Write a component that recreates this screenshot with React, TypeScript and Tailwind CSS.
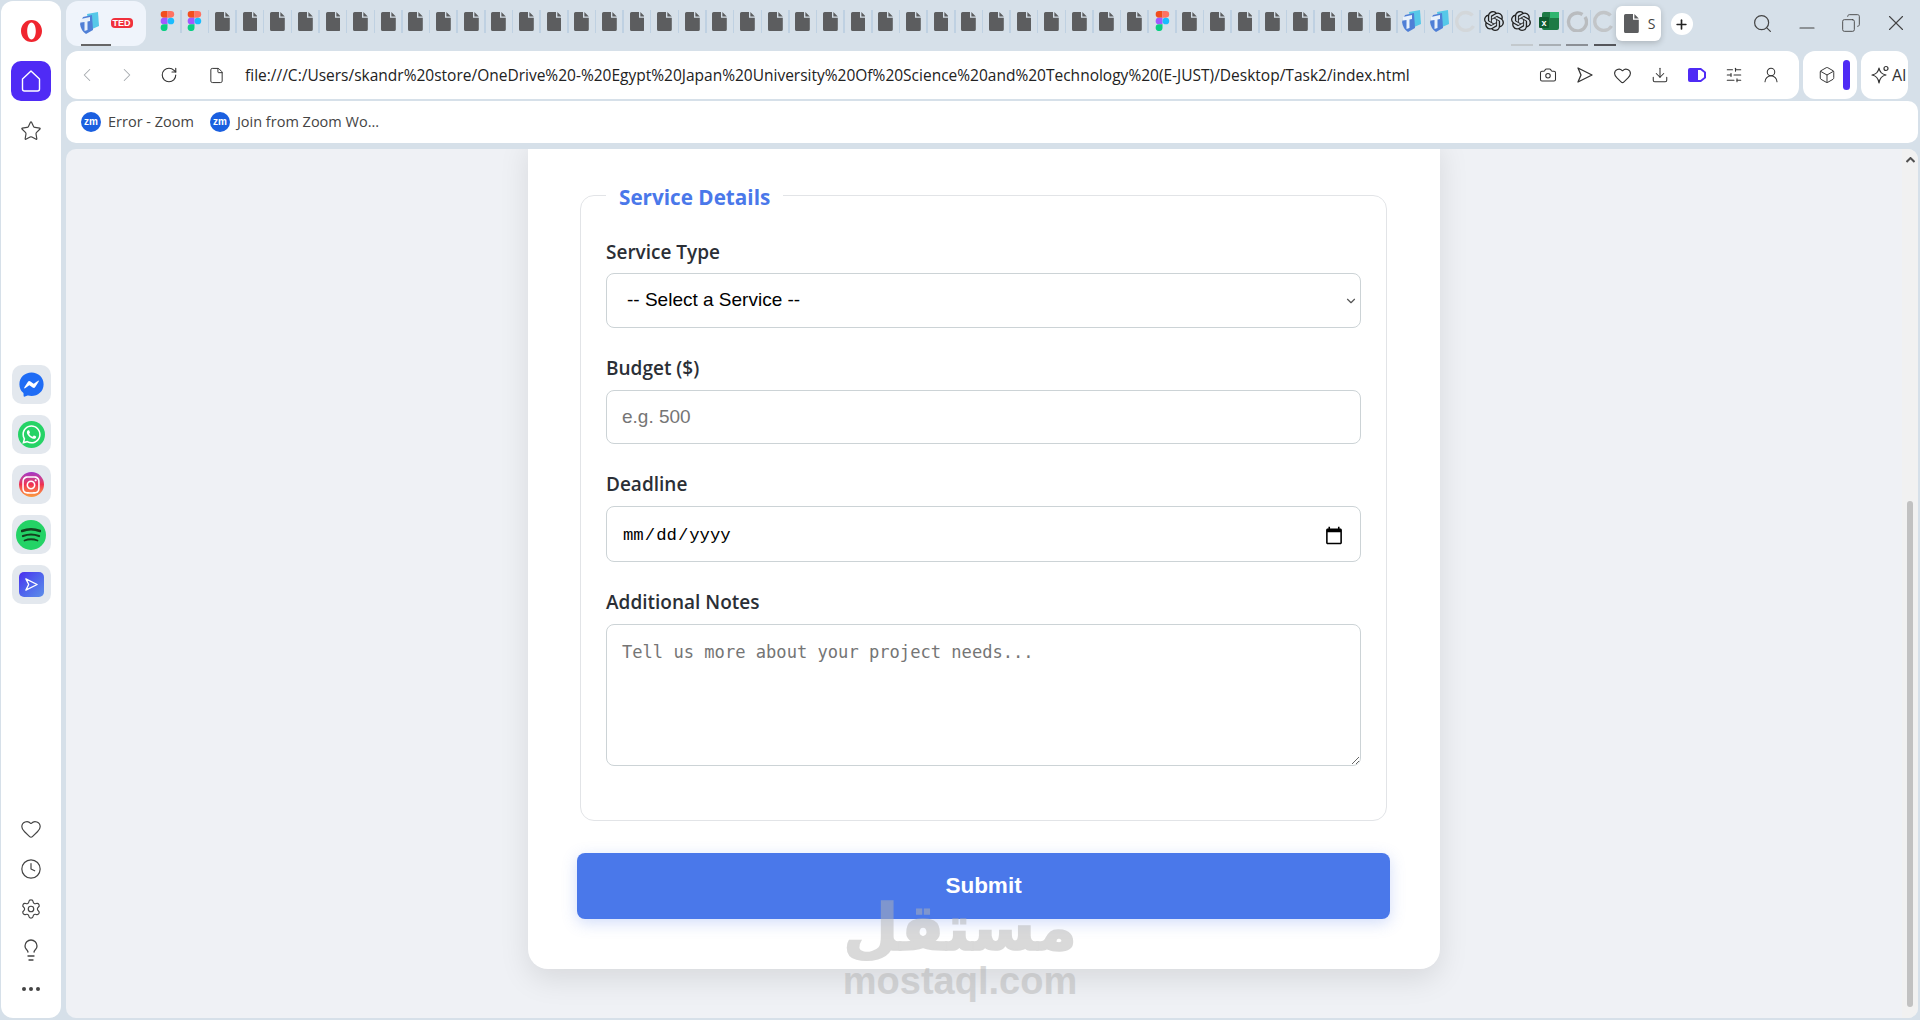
import React from "react";
import {
  ChevronLeft, ChevronRight, ChevronDown, RotateCw, File, Camera, Heart, Download, SlidersHorizontal,
  UserRound, Box, Search, Minus, Copy, X, Star, Clock, Settings, Lightbulb, Plus,
} from "lucide-react";
import { FaFacebookMessenger, FaWhatsapp, FaInstagram } from "react-icons/fa";
import { SiOpenai } from "react-icons/si";

function Doc({ size = 19 }: { size?: number }) {
  return (
    <svg width={size * 0.78} height={size} viewBox="0 0 14 18">
      <path d="M1.5 0H8.5V5.5H14V16.5A1.5 1.5 0 0 1 12.5 18H1.5A1.5 1.5 0 0 1 0 16.5V1.5A1.5 1.5 0 0 1 1.5 0ZM9.8 0L14 4.2H9.8Z" fill="#5c5d5f" />
    </svg>
  );
}

function Figma() {
  return (
    <svg width="15" height="20" viewBox="0 0 15 22">
      <path d="M0 3.6A3.6 3.6 0 0 1 3.6 0H7.5V7.3H3.6A3.6 3.6 0 0 1 0 3.6Z" fill="#f24e1e" />
      <path d="M7.5 0H11.2A3.65 3.65 0 0 1 11.2 7.3H7.5Z" fill="#ff7262" />
      <path d="M0 11A3.6 3.6 0 0 1 3.6 7.3H7.5V14.7H3.6A3.6 3.6 0 0 1 0 11Z" fill="#a259ff" />
      <circle cx="11.2" cy="11" r="3.7" fill="#1abcfe" />
      <path d="M0 18.3A3.6 3.6 0 0 1 3.6 14.7H7.5V18.3A3.7 3.7 0 0 1 0 18.3Z" fill="#0acf83" />
    </svg>
  );
}

function Teams() {
  return (
    <svg width="22" height="24" viewBox="0 0 22 24">
      <path d="M9 3 L20 1 L21 15 L12 19Z" fill="#56c8e8" />
      <path d="M5 6 L14 4 L15 19 L8 23 Q3 20 2 13Z" fill="#4f7fd6" />
      <path d="M3 8 L12 6 L12 10 L9.5 10.5 L9.5 19 L6.5 20 L6.5 11 L3 11.5Z" fill="#e8f1fb" />
    </svg>
  );
}

function Spinner({ tone = "#c9cdd0", d = "M17.5 5.5A9 9 0 1 0 18.5 16" }: { tone?: string; d?: string }) {
  return (
    <svg width="22" height="22" viewBox="0 0 22 22" fill="none">
      <path d={d} stroke={tone} strokeWidth="3.4" />
    </svg>
  );
}

function Excel() {
  return (
    <svg width="20" height="20" viewBox="0 0 20 20">
      <rect x="3" y="1" width="17" height="18" rx="2" fill="#1d7a45" />
      <rect x="11" y="1" width="9" height="6" fill="#2fb56f" />
      <rect x="0" y="6" width="10" height="11" rx="1" fill="#0f5c30" />
      <text x="5" y="15" textAnchor="middle" fontSize="9" fontWeight="700" fill="#fff" fontFamily="Liberation Sans, sans-serif">x</text>
    </svg>
  );
}

type T = { k: string; line?: string };
const tabs: T[] = [];
tabs.push({ k: "figma" }, { k: "figma" });
for (let i = 0; i < 34; i++) tabs.push({ k: "doc" });
tabs.push({ k: "figma" });
for (let i = 0; i < 8; i++) tabs.push({ k: "doc" });
tabs.push({ k: "teams" }, { k: "teams" }, { k: "spin" }, { k: "gpt" }, { k: "gpt", line: "bg-[#c3c9cd]" }, { k: "excel", line: "bg-[#a9afb4]" }, { k: "spin2", line: "bg-[#8b8f95]" }, { k: "spin3", line: "bg-[#55565b]" });

function TabIcon({ k }: { k: string }) {
  if (k === "figma") return <Figma />;
  if (k === "doc") return <Doc />;
  if (k === "teams") return <Teams />;
  if (k === "gpt") return <SiOpenai className="text-[20px] text-[#222]" />;
  if (k === "excel") return <Excel />;
  if (k === "spin") return <Spinner tone="#d3d7da" />;
  if (k === "spin2") return <Spinner tone="#b9bcbf" d="M16.5 4.5A9 9 0 1 0 19 7" />;
  return <Spinner tone="#c2c5c8" />;
}

function TabItem({ t, last }: { t: T; last: boolean }) {
  return (
    <div className="flex h-[46px] w-[27.65px] shrink-0 flex-col items-center">
      <div className="flex h-[44px] w-full items-center justify-center">
        <div className="flex w-[26px] justify-center pb-[2px]">
          <TabIcon k={t.k} />
        </div>
        <div className={last ? "h-[23px] w-[1.5px] shrink-0 mb-[2px]" : "h-[23px] w-[1.5px] shrink-0 bg-[#bfd1e2] mb-[2px]"} />
      </div>
      <div className={`h-[2px] w-[22px] ${t.line ?? ""}`} />
    </div>
  );
}

function SideApp({ children }: { children: React.ReactNode }) {
  return <div className="grid h-[39px] w-[39px] place-items-center rounded-[10px] bg-[#e3e8ee]">{children}</div>;
}

function ZoomDot() {
  return (
    <span className="flex h-[20px] w-[20px] items-center justify-center rounded-full bg-[#1a5fe0] text-[10px] font-bold leading-none text-white" style={{ fontFamily: "'Liberation Sans', sans-serif" }}>
      zm
    </span>
  );
}

const labelCls = "block text-[19px] font-semibold leading-[26px] text-[#2b2f36] [font-family:'Open_Sans',sans-serif]";
const fieldCls = "block w-full rounded-[8px] border-[1.5px] border-[#ccd3d6] bg-white outline-none";

export default function App() {
  return (
    <div className="flex h-[1020px] w-[1920px] overflow-hidden bg-[#d6e0e9] [font-family:'Open_Sans',sans-serif]">
      {/* Sidebar */}
      <aside className="ml-[1px] mt-[1px] mb-[2px] flex w-[60px] shrink-0 flex-col items-center rounded-[12px] bg-white">
        <svg className="mt-[19px]" width="21" height="22" viewBox="0 0 21 22" fill="none">
          <path fillRule="evenodd" clipRule="evenodd" d="M10.5 0C16.3 0 21 4.9 21 11S16.3 22 10.5 22 0 17.1 0 11 4.7 0 10.5 0ZM10.5 2.5C8 2.5 6.2 6.3 6.2 11S8 19.5 10.5 19.5 14.8 15.7 14.8 11 13 2.5 10.5 2.5Z" fill="#f0252f" />
        </svg>
        <div className="mt-[19px] flex h-[40px] w-[40px] items-center justify-center rounded-[10px] bg-[#4f2bf5]">
          <svg width="22" height="24" viewBox="0 0 22 24" fill="none" stroke="#fff" strokeWidth="1.4" strokeLinejoin="round">
            <path d="M11 2 L19.5 10 V20 A2 2 0 0 1 17.5 22 H4.5 A2 2 0 0 1 2.5 20 V10 Z" />
          </svg>
        </div>
        <Star className="mt-[19px]" size={22} strokeWidth={1.3} color="#444" />
        <div className="mt-[223px] flex flex-col gap-[11px]">
          <SideApp>
            <span className="col-start-1 row-start-1 h-[14px] w-[14px] rounded-full bg-white" />
            <FaFacebookMessenger className="col-start-1 row-start-1 text-[25px] text-[#1f6cf5]" />
          </SideApp>
          <SideApp>
            <span className="col-start-1 row-start-1 h-[27px] w-[27px] rounded-full bg-[#25d366]" />
            <FaWhatsapp className="col-start-1 row-start-1 text-[21px] text-white" />
          </SideApp>
          <SideApp>
            <span className="flex h-[25px] w-[25px] items-center justify-center rounded-full bg-gradient-to-b from-[#a332c8] via-[#f0304f] to-[#fa9a3c]">
              <FaInstagram className="text-[20px] text-white" />
            </span>
          </SideApp>
          <SideApp>
            <span className="flex h-[30px] w-[30px] items-center justify-center rounded-full bg-[#24d366]">
              <svg width="20" height="16" viewBox="0 0 20 16" fill="none" stroke="#14401f" strokeLinecap="round">
                <path d="M1 4 Q10 0.5 19 4" strokeWidth="2.6" />
                <path d="M2 9 Q10 6 18 9" strokeWidth="2.2" />
                <path d="M3.5 13.5 Q10 11 16.5 13.5" strokeWidth="1.8" />
              </svg>
            </span>
          </SideApp>
          <SideApp>
            <span className="flex h-[25px] w-[25px] items-center justify-center rounded-[5px] bg-gradient-to-br from-[#4a25ef] to-[#5d8ee8]">
              <svg width="15" height="15" viewBox="0 0 16 16" fill="none" stroke="#fff" strokeWidth="1.4" strokeLinejoin="round">
                <path d="M2 2 L14 8 L2 14 L5 8 Z" />
              </svg>
            </span>
          </SideApp>
        </div>
        <div className="mt-auto mb-[26px] flex flex-col items-center gap-[18px]">
          <Heart size={22} strokeWidth={1.3} color="#444" />
          <Clock size={22} strokeWidth={1.3} color="#444" />
          <Settings size={22} strokeWidth={1.3} color="#444" />
          <Lightbulb size={24} strokeWidth={1.3} color="#444" />
          <div className="mt-[6px] flex h-[6px] items-center gap-[3px]">
            <span className="h-[4px] w-[4px] rounded-full bg-[#444]" />
            <span className="h-[4px] w-[4px] rounded-full bg-[#444]" />
            <span className="h-[4px] w-[4px] rounded-full bg-[#444]" />
          </div>
        </div>
      </aside>

      {/* Main column */}
      <div className="flex min-w-0 flex-1 flex-col pl-[5px] pr-[2px]">
        {/* Tab strip */}
        <div className="flex h-[51px] shrink-0 items-start">
          <div className="mt-[1px] flex h-[45px] w-[80px] shrink-0 flex-col items-center rounded-[12px] bg-[#eff4fb]">
            <div className="flex h-[43px] w-full items-center justify-center gap-[11px] pr-[2px]">
              <Teams />
              <span className="rounded-[4px] bg-[#f0303c] px-[2px] text-[9px] font-black leading-[10px] text-white" style={{ fontFamily: "'Liberation Sans', sans-serif" }}>TED</span>
            </div>
            <div className="mr-[20px] h-[2px] w-[30px] bg-[#666]" />
          </div>
          <div className="ml-[8px] flex shrink-0">
            {tabs.map((t, i) => <TabItem key={i} t={t} last={i === tabs.length - 1} />)}
          </div>
          <div className="-ml-[3px] mt-[6px] flex h-[35px] w-[45px] shrink-0 items-center gap-[9px] overflow-hidden rounded-[6px] bg-white pl-[8px] shadow-[0_2px_6px_rgba(0,0,0,0.2)]">
            <Doc />
            <span className="text-[14px] text-[#444]">S</span>
          </div>
          <div className="ml-[10px] mt-[13px] flex h-[22px] w-[22px] shrink-0 items-center justify-center rounded-full bg-white">
            <Plus size={15} strokeWidth={2.6} color="#222" />
          </div>
          <div className="ml-auto flex h-[46px] items-center pr-[9px]">
            <Search size={21} strokeWidth={1.4} color="#444" />
            <Minus className="ml-[22px] mt-[10px]" size={24} strokeWidth={1.1} color="#444" />
            <Copy className="ml-[22px] scale-x-[-1]" size={20} strokeWidth={1.1} color="#444" />
            <X className="ml-[22px]" size={26} strokeWidth={1} color="#444" />
          </div>
        </div>

        {/* Address row */}
        <div className="flex h-[48px] shrink-0 gap-[4px] pr-[10px]">
          <div className="flex min-w-0 flex-1 items-center rounded-[12px] bg-white pl-[10px]">
            <ChevronLeft size={22} strokeWidth={1.1} color="#a4a9ad" />
            <ChevronRight className="ml-[18px]" size={22} strokeWidth={1.1} color="#a4a9ad" />
            <RotateCw className="ml-[22px]" size={18} strokeWidth={1.5} color="#333" />
            <File className="ml-[30px]" size={17} strokeWidth={1.4} color="#333" />
            <span className="ml-[20px] whitespace-nowrap text-[15.5px] leading-[20px] text-[#222]">
              file:///C:/Users/skandr%20store/OneDrive%20-%20Egypt%20Japan%20University%20Of%20Science%20and%20Technology%20(E-JUST)/Desktop/Task2/index.html
            </span>
            <div className="ml-auto flex items-center gap-[19px] pr-[19px]">
              <Camera size={18} strokeWidth={1.4} color="#333" />
              <svg width="18" height="18" viewBox="0 0 18 18" fill="none" stroke="#333" strokeWidth="1.3" strokeLinejoin="round"><path d="M2 2 L16 9 L2 16 L5 9 Z" /></svg>
              <Heart size={19} strokeWidth={1.4} color="#333" />
              <Download size={18} strokeWidth={1.4} color="#333" />
              <svg width="18" height="14" viewBox="0 0 18 14"><path d="M2 0H13L18 4V10L13 14H2A2 2 0 0 1 0 12V2A2 2 0 0 1 2 0Z" fill="#4f2bf5" /><path d="M10 2H12.5L16 4.8V9.2L12.5 12H10Z" fill="#fff" /></svg>
              <SlidersHorizontal size={18} strokeWidth={1.4} color="#333" />
              <UserRound size={18} strokeWidth={1.4} color="#333" />
            </div>
          </div>
          <div className="flex w-[54px] shrink-0 items-center gap-[7px] rounded-[12px] bg-white pl-[15px]">
            <Box size={18} strokeWidth={1.3} color="#333" />
            <div className="h-[30px] w-[7px] rounded-full bg-[#4f2bf5]" />
          </div>
          <div className="flex w-[47px] shrink-0 items-center gap-[1px] rounded-[12px] bg-white pl-[10px]">
            <svg className="shrink-0" width="20" height="20" viewBox="0 0 20 20" fill="none" stroke="#333" strokeWidth="1.2" strokeLinejoin="round"><path d="M8 3 Q9 9 15 10 Q9 11 8 18 Q7 11 1 10 Q7 9 8 3Z" /><circle cx="15" cy="3.5" r="2" /></svg>
            <span className="text-[16px] leading-none text-[#333]">AI</span>
          </div>
        </div>

        {/* Bookmarks */}
        <div className="mt-[2px] flex h-[42px] shrink-0 items-center rounded-[10px] bg-white pl-[15px] text-[14.5px] text-[#444]">
          <ZoomDot />
          <span className="ml-[7px]">Error - Zoom</span>
          <span className="ml-[16px]"><ZoomDot /></span>
          <span className="ml-[7px]">Join from Zoom Wo...</span>
        </div>

        {/* Page */}
        <div className="mt-[6px] mb-[2px] flex min-h-0 flex-1 overflow-hidden rounded-[10px] bg-[#eff1f5]">
          <div className="flex min-w-0 flex-1 flex-col items-center justify-end pb-[49px]">
            <div className="relative w-[912px] shrink-0 rounded-b-[20px] bg-white pb-[50px] pl-[49px] pr-[50px] pt-[40px] shadow-[0_10px_30px_rgba(0,0,0,0.1)]">
              <form className="flex flex-col">
                <fieldset className="mx-[3px] rounded-[14px] border-[1.5px] border-[#e2e4e7] px-[25px] pb-[54px]">
                  <legend className="px-[13px] pt-[4px] text-[20.7px] font-bold leading-[30px] text-[#4a78ea]">Service Details</legend>
                  <label className={`${labelCls} mt-[27px]`}>Service Type</label>
                  <div className="relative mt-[8px]">
                    <select className={`${fieldCls} h-[55px] appearance-none pl-[20px] text-[19px] text-black [font-family:'Liberation_Sans',sans-serif]`} defaultValue="">
                      <option value="">-- Select a Service --</option>
                    </select>
                    <ChevronDown className="pointer-events-none absolute right-[3px] top-[21px]" size={14} strokeWidth={2} color="#555" />
                  </div>
                  <label className={`${labelCls} mt-[27px]`}>Budget ($)</label>
                  <input type="text" placeholder="e.g. 500" className={`${fieldCls} mt-[9px] h-[54px] px-[15px] text-[19px] text-black placeholder:text-[#757575] [font-family:'Liberation_Sans',sans-serif]`} />
                  <label className={`${labelCls} mt-[27px]`}>Deadline</label>
                  <input type="date" className={`${fieldCls} mt-[9px] h-[56px] pl-[15px] pr-[16px] pt-[3px] text-[17.3px] text-black [font-family:'Liberation_Mono',monospace] [&::-webkit-calendar-picker-indicator]:m-0 [&::-webkit-calendar-picker-indicator]:h-[20px] [&::-webkit-calendar-picker-indicator]:w-[20px] [&::-webkit-calendar-picker-indicator]:p-0`} />
                  <label className={`${labelCls} mt-[27px]`}>Additional Notes</label>
                  <textarea placeholder="Tell us more about your project needs..." className={`${fieldCls} mt-[9px] h-[142px] px-[15px] pb-[13px] pt-[15px] text-[17.1px] leading-[24px] placeholder:text-[#757575] [font-family:'DejaVu_Sans_Mono',monospace]`} />
                </fieldset>
                <button type="button" className="mt-[32px] h-[66px] w-full rounded-[8px] bg-[#4a78ea] text-[22.5px] font-bold text-white shadow-[0_4px_15px_rgba(74,120,234,0.25)] [font-family:'Liberation_Sans',sans-serif]">
                  Submit
                </button>
              </form>
              <div className="pointer-events-none absolute bottom-[-30px] left-[317px] flex w-[230px] flex-col items-center text-[#b4b4b4] opacity-50">
                <span className="text-[64px] font-bold leading-[70px] [-webkit-text-stroke:1.5px_#b4b4b4] [font-family:'DejaVu_Sans',sans-serif]" dir="rtl">مستقل</span>
                <span className="text-[38px] font-bold leading-[36px] [font-family:'Liberation_Sans',sans-serif]">mostaql.com</span>
              </div>
            </div>
          </div>
          {/* Scrollbar */}
          <div className="flex w-[16px] shrink-0 flex-col items-center bg-[#f1f1f1] pt-[8px]">
            <svg width="9" height="6" viewBox="0 0 9 6"><path d="M0.5 5 L4.5 1 L8.5 5" fill="none" stroke="#505050" strokeWidth="2" /></svg>
            <div className="mt-[338px] h-[506px] w-[6px] rounded-full bg-[#c1c1c1]" />
          </div>
        </div>
      </div>
    </div>
  );
}
